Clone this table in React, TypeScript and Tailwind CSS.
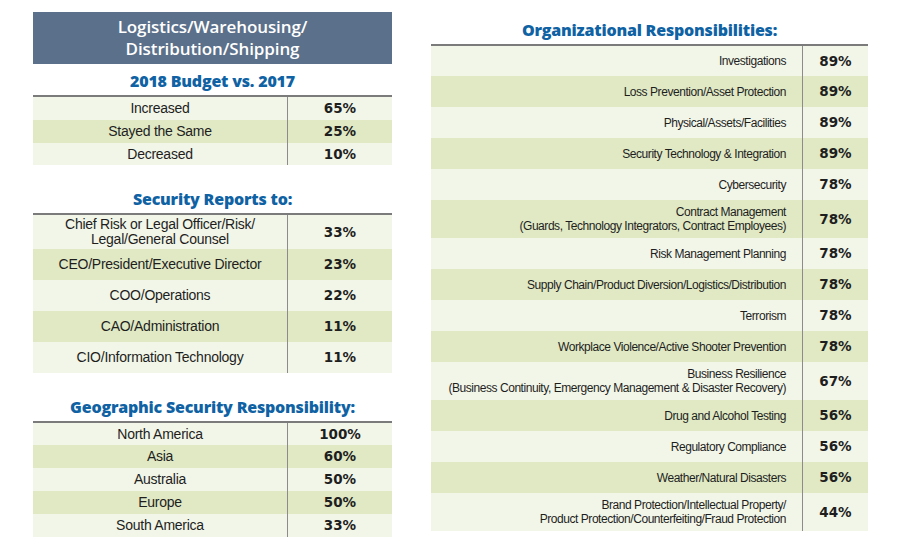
import React from "react";

type Row = { label: string[]; pct: string; h: number };

const LIGHT = "bg-[#f2f6e8]";
const DARK = "bg-[#e0e9c4]";

function Title({ text, h = 48 }: { text: string; h?: number }) {
  return (
    <div
      className="flex items-end justify-center pb-[4px]"
      style={{ height: h }}
    >
      <span className="font-['Open_Sans',sans-serif] font-extrabold text-[16px] leading-[20px] text-[#0f62a3] tracking-[-0.2px]">
        {text}
      </span>
    </div>
  );
}

function LeftTable({ rows }: { rows: Row[] }) {
  return (
    <div className="border-t-2 border-[#7b7b7b]">
      {rows.map((r, i) => (
        <div
          key={i}
          className={`flex ${i % 2 === 0 ? LIGHT : DARK}`}
          style={{ height: r.h }}
        >
          <div className="w-[254px] flex flex-col items-center justify-center font-['Liberation_Sans',Arial,sans-serif] text-[14px] leading-[15px] text-[#1e1e1e] tracking-[-0.25px] text-center">
            {r.label.map((l, j) => (
              <span key={j}>{l}</span>
            ))}
          </div>
          <div className="flex-1 border-l border-[#8c8c8c] flex items-center justify-center font-['DejaVu_Sans',sans-serif] font-bold text-[13.5px] text-[#1e1e1e]">
            {r.pct}
          </div>
        </div>
      ))}
    </div>
  );
}

function RightTable({ rows }: { rows: Row[] }) {
  return (
    <div className="border-t-2 border-[#7b7b7b]">
      {rows.map((r, i) => (
        <div
          key={i}
          className={`flex ${i % 2 === 0 ? LIGHT : DARK}`}
          style={{ height: r.h }}
        >
          <div className="w-[371px] pr-[16px] flex flex-col items-end justify-center font-['Liberation_Sans',Arial,sans-serif] text-[12px] leading-[14px] text-[#1e1e1e] tracking-[-0.45px] text-right">
            {r.label.map((l, j) => (
              <span key={j}>{l}</span>
            ))}
          </div>
          <div className="flex-1 border-l border-[#8c8c8c] flex items-center justify-center font-['DejaVu_Sans',sans-serif] font-bold text-[13.5px] text-[#1e1e1e]">
            {r.pct}
          </div>
        </div>
      ))}
    </div>
  );
}

const budget: Row[] = [
  { label: ["Increased"], pct: "65%", h: 23 },
  { label: ["Stayed the Same"], pct: "25%", h: 23 },
  { label: ["Decreased"], pct: "10%", h: 22 },
];

const reports: Row[] = [
  { label: ["Chief Risk or Legal Officer/Risk/", "Legal/General Counsel"], pct: "33%", h: 34 },
  { label: ["CEO/President/Executive Director"], pct: "23%", h: 31 },
  { label: ["COO/Operations"], pct: "22%", h: 31 },
  { label: ["CAO/Administration"], pct: "11%", h: 31 },
  { label: ["CIO/Information Technology"], pct: "11%", h: 31 },
];

const geo: Row[] = [
  { label: ["North America"], pct: "100%", h: 22 },
  { label: ["Asia"], pct: "60%", h: 23 },
  { label: ["Australia"], pct: "50%", h: 23 },
  { label: ["Europe"], pct: "50%", h: 23 },
  { label: ["South America"], pct: "33%", h: 23 },
];

const org: Row[] = [
  { label: ["Investigations"], pct: "89%", h: 30 },
  { label: ["Loss Prevention/Asset Protection"], pct: "89%", h: 31 },
  { label: ["Physical/Assets/Facilities"], pct: "89%", h: 31 },
  { label: ["Security Technology & Integration"], pct: "89%", h: 31 },
  { label: ["Cybersecurity"], pct: "78%", h: 31 },
  {
    label: ["Contract Management", "(Guards, Technology Integrators, Contract Employees)"],
    pct: "78%",
    h: 38,
  },
  { label: ["Risk Management Planning"], pct: "78%", h: 31 },
  { label: ["Supply Chain/Product Diversion/Logistics/Distribution"], pct: "78%", h: 31 },
  { label: ["Terrorism"], pct: "78%", h: 31 },
  { label: ["Workplace Violence/Active Shooter Prevention"], pct: "78%", h: 31 },
  {
    label: [
      "Business Resilience",
      "(Business Continuity, Emergency Management & Disaster Recovery)",
    ],
    pct: "67%",
    h: 38,
  },
  { label: ["Drug and Alcohol Testing"], pct: "56%", h: 31 },
  { label: ["Regulatory Compliance"], pct: "56%", h: 31 },
  { label: ["Weather/Natural Disasters"], pct: "56%", h: 31 },
  {
    label: [
      "Brand Protection/Intellectual Property/",
      "Product Protection/Counterfeiting/Fraud Protection",
    ],
    pct: "44%",
    h: 38,
  },
];

export default function App() {
  return (
    <div className="w-[900px] h-[550px] bg-white flex overflow-hidden">
      <div className="ml-[33px] w-[359px] pt-[12px] flex flex-col">
        <div className="h-[52px] bg-[#5b708a] flex flex-col items-center justify-center font-['Open_Sans',sans-serif] font-semibold text-[17px] leading-[22px] text-white tracking-[-0.1px]">
          <span>Logistics/Warehousing/</span>
          <span>Distribution/Shipping</span>
        </div>
        <Title text="2018 Budget vs. 2017" h={31} />
        <LeftTable rows={budget} />
        <Title text="Security Reports to:" />
        <LeftTable rows={reports} />
        <Title text="Geographic Security Responsibility:" />
        <LeftTable rows={geo} />
      </div>
      <div className="ml-[39px] w-[437px] flex flex-col">
        <Title text="Organizational Responsibilities:" h={44} />
        <RightTable rows={org} />
      </div>
    </div>
  );
}
